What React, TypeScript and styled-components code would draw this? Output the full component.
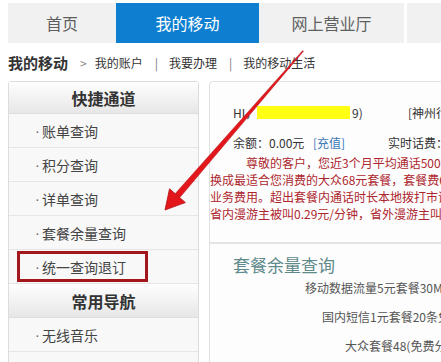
import React from "react";
import styled, { createGlobalStyle } from "styled-components";

const Global = createGlobalStyle`
  html, body { margin: 0; padding: 0; background: #fff; overflow: hidden; }
  body { font-family: "Noto Sans CJK SC", "Noto Sans", sans-serif; color: #333; }
`;

const Page = styled.div`
  position: relative;
  width: 441px;
  height: 362px;
  overflow: hidden;
  padding: 3px 0 0 8px;
  box-sizing: border-box;
`;

const Nav = styled.div`
  display: flex;
  height: 40px;
  width: 520px;
  background: #f1f1f1;
`;

const Tab = styled.div<{ $w: number; $active?: boolean }>`
  flex: none;
  width: ${(p) => p.$w}px;
  display: flex;
  align-items: center;
  justify-content: center;
  font-size: 16px;
  color: ${(p) => (p.$active ? "#fff" : "#5f5f5f")};
  background: ${(p) => (p.$active ? "#0e7fd0" : "transparent")};
`;

const TabSep = styled.div`
  flex: none;
  width: 3px;
  background: #fff;
`;

const Crumbs = styled.div`
  display: flex;
  align-items: center;
  height: 38px;
  white-space: nowrap;
`;

const CrumbTitle = styled.span`
  font-size: 15px;
  font-weight: bold;
  color: #333;
  margin-right: 12px;
`;

const Arrow = styled.span`
  font-size: 12px;
  color: #888;
  margin-right: 8px;
`;

const CrumbLink = styled.span`
  font-size: 12px;
  color: #333;
`;

const CrumbSep = styled.span`
  font-size: 12px;
  color: #777;
  margin: 0 11px 0 12px;
`;

const Main = styled.div`
  display: flex;
  gap: 10px;
  align-items: flex-start;
`;

const Sidebar = styled.div`
  flex: none;
  width: 191px;
  box-sizing: border-box;
  border: 1px solid #dcdcdc;
  border-radius: 3px;
  background: #f8f8f8;
`;

const SideHead = styled.div<{ $h: number }>`
  height: ${(p) => p.$h}px;
  display: flex;
  align-items: center;
  justify-content: center;
  font-size: 16px;
  font-weight: bold;
  color: #333;
  background: linear-gradient(#fefefe, #e7e7e7);
  border-bottom: 1px solid #dedede;
`;

const SideRow = styled.div`
  height: 33px;
  display: flex;
  align-items: center;
  border-bottom: 1px solid #e6e6e6;
`;

const SideLabel = styled.div<{ $marked?: boolean }>`
  display: flex;
  align-items: center;
  margin-left: 8px;
  width: 131px;
  height: 31px;
  box-sizing: border-box;
  padding-left: 15px;
  border: 3px solid ${(p) => (p.$marked ? "#a3161c" : "transparent")};
  font-size: 14px;
  color: #444;
  white-space: nowrap;
`;

const Dot = styled.span`
  flex: none;
  width: 7px;
  font-family: "Liberation Sans", Arial, sans-serif;
  font-size: 14px;
  color: #666;
`;

const Panel = styled.div`
  flex: none;
  width: 300px;
  height: 290px;
  box-sizing: border-box;
  border: 1px solid #e0e0e0;
  border-radius: 4px 0 0 0;
  background: #fdfdfd;
  display: flex;
  flex-direction: column;
  font-size: 12px;
  color: #333;
`;

const InfoRow = styled.div<{ $top: number }>`
  display: flex;
  align-items: center;
  height: 18px;
  margin-top: ${(p) => p.$top}px;
  padding-left: 23px;
  white-space: nowrap;
`;

const Cell = styled.span<{ $w?: number; $color?: string }>`
  flex: none;
  ${(p) => (p.$w ? `width: ${p.$w}px;` : "")}
  color: ${(p) => p.$color || "#333"};
`;

const Mask = styled.span`
  flex: none;
  width: 93px;
  height: 13px;
  background: #ffff14;
  margin-right: 2px;
`;

const Notice = styled.div`
  margin-top: 3px;
  color: #ad262d;
  font-size: 12px;
  line-height: 17px;
`;

const NoticeLine = styled.div<{ $indent: number }>`
  white-space: nowrap;
  padding-left: ${(p) => p.$indent}px;
`;

const Divider = styled.div`
  margin-top: 20px;
  height: 2px;
  background: #e4e4e4;
`;

const Heading = styled.div`
  margin-top: 9px;
  height: 24px;
  line-height: 24px;
  padding-left: 23px;
  font-size: 17px;
  color: #5e8a8b;
  white-space: nowrap;
`;

const Items = styled.div`
  margin-top: 1px;
  display: flex;
  flex-direction: column;
  gap: 9px;
`;

const Item = styled.div<{ $indent: number }>`
  height: 20px;
  line-height: 20px;
  padding-left: ${(p) => p.$indent}px;
  color: #555;
  font-size: 12px;
  white-space: nowrap;
`;

const Overlay = styled.svg`
  position: absolute;
  left: 0;
  top: 0;
  pointer-events: none;
`;

const quick = ["账单查询", "积分查询", "详单查询", "套餐余量查询", "统一查询退订"];
const common = ["无线音乐", "飞信"];

function RedArrow() {
  const sx = 303, sy = 51;
  const tx = 165, ty = 210;
  const dx = tx - sx, dy = ty - sy;
  const len = Math.hypot(dx, dy);
  const ux = dx / len, uy = dy / len;
  const nx = -uy, ny = ux;
  const headLen = 19, headHalf = 10.5;
  const bx = tx - ux * headLen, by = ty - uy * headLen;
  const w0 = 0.5, w1 = 3;
  const shaft = [
    [sx + nx * w0, sy + ny * w0],
    [bx + nx * w1, by + ny * w1],
    [bx - nx * w1, by - ny * w1],
    [sx - nx * w0, sy - ny * w0],
  ]
    .map((p) => p.join(","))
    .join(" ");
  const head = [
    [tx, ty],
    [bx + nx * headHalf, by + ny * headHalf],
    [bx - nx * headHalf, by - ny * headHalf],
  ]
    .map((p) => p.join(","))
    .join(" ");
  return (
    <Overlay width={441} height={362} viewBox="0 0 441 362">
      <polygon points={shaft} fill="#e3161b" stroke="#b31015" strokeWidth={0.6} strokeLinejoin="round" />
      <polygon points={head} fill="#e3161b" stroke="#b31015" strokeWidth={0.8} strokeLinejoin="round" />
    </Overlay>
  );
}

export default function App() {
  return (
    <>
      <Global />
      <Page>
        <Nav>
          <Tab $w={108}>首页</Tab>
          <Tab $w={143} $active>我的移动</Tab>
          <Tab $w={145}>网上营业厅</Tab>
          <TabSep />
          <Tab $w={120} />
        </Nav>
        <Crumbs>
          <CrumbTitle>我的移动</CrumbTitle>
          <Arrow>&gt;</Arrow>
          <CrumbLink>我的账户</CrumbLink>
          <CrumbSep>|</CrumbSep>
          <CrumbLink>我要办理</CrumbLink>
          <CrumbSep>|</CrumbSep>
          <CrumbLink>我的移动生活</CrumbLink>
        </Crumbs>
        <Main>
          <Sidebar>
            <SideHead $h={31}>快捷通道</SideHead>
            {quick.map((q, i) => (
              <SideRow key={q}>
                <SideLabel $marked={i === quick.length - 1}>
                  <Dot>·</Dot>
                  {q}
                </SideLabel>
              </SideRow>
            ))}
            <SideHead $h={33}>常用导航</SideHead>
            {common.map((q) => (
              <SideRow key={q}>
                <SideLabel>
                  <Dot>·</Dot>
                  {q}
                </SideLabel>
              </SideRow>
            ))}
          </Sidebar>
          <Panel>
            <InfoRow $top={21}>
              <Cell $w={24}>HI，</Cell>
              <Mask />
              <Cell $w={56}>9)</Cell>
              <Cell>[神州行]</Cell>
            </InfoRow>
            <InfoRow $top={12}>
              <Cell $w={80}>余额：0.00元</Cell>
              <Cell $w={75} $color="#3b78b8">[充值]</Cell>
              <Cell>实时话费：</Cell>
            </InfoRow>
            <Notice>
              <NoticeLine $indent={36}>尊敬的客户，您近3个月平均通话500分钟</NoticeLine>
              <NoticeLine $indent={0}>换成最适合您消费的大众68元套餐，套餐费68元</NoticeLine>
              <NoticeLine $indent={0}>业务费用。超出套餐内通话时长本地拨打市话</NoticeLine>
              <NoticeLine $indent={0}>省内漫游主被叫0.29元/分钟，省外漫游主叫</NoticeLine>
            </Notice>
            <Divider />
            <Heading>套餐余量查询</Heading>
            <Items>
              <Item $indent={95}>移动数据流量5元套餐30M免费</Item>
              <Item $indent={112}>国内短信1元套餐20条免费</Item>
              <Item $indent={135}>大众套餐48(免费分钟数)</Item>
            </Items>
          </Panel>
        </Main>
        <RedArrow />
      </Page>
    </>
  );
}
